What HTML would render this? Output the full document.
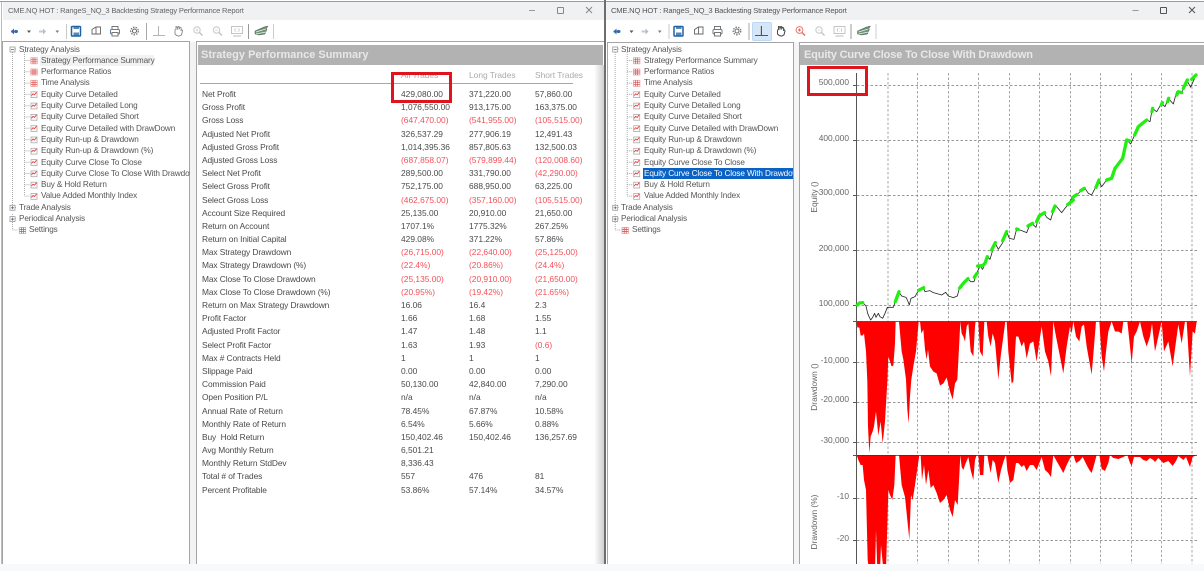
<!DOCTYPE html>
<html><head><meta charset="utf-8"><style>
html,body{margin:0;padding:0;width:1204px;height:571px;overflow:hidden;background:#fff}
body{position:relative;font-family:"Liberation Sans",sans-serif;color:#4a4a4a;filter:blur(.35px)}
.a{position:absolute}
.title{position:absolute;top:2px;height:18px;background:#f0f1f3;font-size:7.6px;line-height:18px;color:#666;white-space:nowrap;letter-spacing:-.2px}
.head{position:absolute;top:45px;height:20px;background:#b2b2b2;color:#e8e8e8;font-weight:bold;font-size:11px;line-height:20px;white-space:nowrap;overflow:hidden}
.tree{position:absolute;top:42px;height:522px;overflow:hidden;font-size:8.2px;color:#555;letter-spacing:-.12px}
.tree div{position:absolute;white-space:nowrap;height:11px;line-height:11px}
.sel{background:#0a62c4;color:#fff;padding:0 1px}
.rep{position:absolute;left:0;top:88px;font-size:8.4px;color:#4a4a4a}
.r{position:relative;height:13.2px;line-height:13.2px;white-space:nowrap}
.r span{position:absolute;top:0}
.r .l{left:202px;letter-spacing:-.1px}.r .c1{left:401px}.r .c2{left:469px}.r .c3{left:535px}
.n{color:#f3515a}
.ax{position:absolute;font-size:8.4px;color:#666;text-align:right;width:49px;line-height:10px;white-space:nowrap}
.rot{position:absolute;font-size:8.4px;color:#666;transform:rotate(-90deg);transform-origin:center;white-space:nowrap;width:80px;text-align:center;line-height:10px}
</style></head><body>

<!-- top border -->
<div class="a" style="left:0;top:1px;width:1204px;height:1px;background:#9c9c9c"></div>

<!-- window chrome -->
<div class="title" style="left:3px;width:601px;padding-left:5px;box-sizing:border-box">CME.NQ HOT : RangeS_NQ_3 Backtesting Strategy Performance Report</div>
<div class="title" style="left:606px;width:598px;padding-left:5px;box-sizing:border-box;color:#555">CME.NQ HOT : RangeS_NQ_3 Backtesting Strategy Performance Report</div>
<div class="a" style="left:604px;top:0;width:2px;height:564px;background:#6e6e6e"></div>
<div class="a" style="left:1px;top:2px;width:1px;height:562px;background:#bbb"></div>
<div class="a" style="left:0;top:564px;width:1204px;height:7px;background:#f8f9fb"></div>

<svg class="a" style="left:0;top:0" width="1204" height="42" fill="none">
<defs>
<g id="tb">
<path d="M11 31.500h7" stroke="#5a84bd" stroke-width="2"/><path d="M14 28.500l-3 3 3 3z" fill="#2f66ad"/><circle cx="16" cy="31.500" r="1.600" fill="#2f66ad"/>
<path d="M27 30.500h4l-2 2.500z" fill="#555"/>
<path d="M39 31.500h6" stroke="#c3cbd6" stroke-width="2"/><path d="M43 28.500l3 3-3 3z" fill="#b4bdc9"/>
<path d="M55.500 30.500h3.500l-1.700 2.500z" fill="#777"/>
<path d="M66.500 24v15" stroke="#c8c8c8"/>
<rect x="71.500" y="26.500" width="9" height="9.500" rx=".8" stroke="#1f63a6" stroke-width="1.500"/><path d="M73.500 32.500h5.500v3.500h-5.500zM73.500 26.500h5.500v2.500h-5.500z" fill="#1f63a6" opacity=".75"/>
<path d="M92 29.500l4-2.500h4.500v7h-8.500zM96 27v7" stroke="#666" stroke-width=".9"/>
<rect x="112" y="26.500" width="6" height="3" stroke="#777"/><rect x="110.500" y="29.500" width="9" height="4.500" rx="1" stroke="#5f7f9f"/><rect x="112" y="32.500" width="6" height="3.500" stroke="#777" fill="#fff"/>
<circle cx="134.500" cy="31" r="2" stroke="#666"/><circle cx="134.500" cy="31" r="3.800" stroke="#777" stroke-width="1.300" stroke-dasharray="1.500 1.200"/>
<path d="M146.500 23v17" stroke="#aaa"/>
<path d="M153 35.500h12M158.500 26v9.500" stroke="#b5b5b5"/>
<path d="M175 34v-4l1-.500v-3l1 .2 .5 2 .7-2.200 1 .2v2l1-1.300 1 .5-.2 2.500 1-.5 .5 1-1 4-2.500 1.200-2.200-.5z" stroke="#888" stroke-width=".9"/>
<circle cx="197" cy="30" r="3.200" stroke="#c7c7c7"/><path d="M199.500 32.500l3 3" stroke="#c0c0c0" stroke-width="1.300"/><path d="M195.500 30h3M197 28.500v3" stroke="#ccc" stroke-width=".7"/>
<circle cx="216.500" cy="30" r="3.200" stroke="#c7c7c7"/><path d="M219 32.500l3 3" stroke="#c0c0c0" stroke-width="1.300"/><path d="M215 30h3" stroke="#ccc" stroke-width=".7"/>
<rect x="231.500" y="26.500" width="11" height="7" stroke="#c4c4c4"/><path d="M233 36h8" stroke="#ccc" stroke-width="1.300"/><path d="M235 28.500v3M237 28.500v.5M237 31v.5M239 28.500v3" stroke="#b0b0b0" stroke-width=".7"/>
<path d="M248.500 24v15" stroke="#999"/>
<path d="M255 31l9-4 4-1-2 3-3 1 4-1-2 5-6 1-4-1z" fill="#6f8f6f" stroke="#556"  stroke-width=".5"/><path d="M256 32l10-3M256 34l10-2" stroke="#dfe" stroke-width=".7"/>
<path d="M273.500 24v15" stroke="#ccc"/>
</g>
</defs>
<use href="#tb"/>
<rect x="752.500" y="22.500" width="19" height="18" rx="1.500" fill="#d4e6f8" stroke="#bcd8f2"/>
<use href="#tb" transform="translate(602.500 0)"/>
<path d="M755 35.500h13M761.500 26v9.500" stroke="#2a5f9a"/>
<circle cx="799.500" cy="30" r="3.400" fill="#fff" stroke="#ee7b6c"/><path d="M802 32.500l3 3" stroke="#ee6a5b" stroke-width="1.300"/><path d="M798 30h3M799.500 28.500v3" stroke="#e34" stroke-width=".7"/>
<path d="M777.500 34v-4l1-.500v-3l1 .2 .5 2 .7-2.200 1 .2v2l1-1.300 1 .5-.2 2.500 1-.5 .5 1-1 4-2.500 1.200-2.200-.5z" stroke="#444" stroke-width=".9"/>
<!-- window controls right -->
<path d="M1132.500 10.500h6" stroke="#999"/><rect x="1160.500" y="7.500" width="6" height="6" rx=".5" stroke="#555"/><path d="M1189 7l6 6M1195 7l-6 6" stroke="#555"/>
<!-- window controls left -->
<path d="M529 10.500h6" stroke="#999"/><rect x="557.500" y="7.500" width="6" height="6" rx=".5" stroke="#888"/><path d="M586 7l6 6M592 7l-6 6" stroke="#888"/>
</svg>

<!-- panel borders -->
<div class="a" style="left:2px;top:41px;width:188px;height:523px;border:1px solid #a5a5a5;border-bottom:0;box-sizing:border-box"></div>
<div class="a" style="left:190px;top:42px;width:6px;height:522px;background:#f3f3f3"></div>
<div class="a" style="left:196px;top:41px;width:408px;height:523px;border-left:1px solid #a5a5a5;border-top:1px solid #a5a5a5;box-sizing:border-box"></div>
<div class="a" style="left:607px;top:42px;width:187px;height:522px;border:1px solid #a5a5a5;border-bottom:0;box-sizing:border-box"></div>
<div class="a" style="left:794px;top:42px;width:5px;height:522px;background:#f5f5f5"></div>
<div class="a" style="left:799px;top:42px;width:405px;height:1px;background:#a5a5a5"></div>
<div class="a" style="left:799px;top:42px;width:1px;height:522px;background:#a5a5a5"></div>

<!-- Left tree -->
<svg class="a" style="left:0;top:0" width="800" height="240" fill="none">
<defs>
<g id="tg"><rect x="-3.200" y="-3" width="6.400" height="6" fill="#fff" stroke="#e2a0a0" stroke-width=".8"/><path d="M-3.200-1h6.400M-3.200 1h6.400M-1 -3v6M1-3v6" stroke="#d44" stroke-width=".7"/></g>
<g id="cg"><rect x="-3" y="-2.800" width="6" height="5.800" fill="#fff" stroke="#aaa" stroke-width=".8"/><path d="M-2.500 1l1.500-1.800 1.500 1 2-2.500" stroke="#e04040" stroke-width=".9"/></g>
<g id="pl"><rect x="-2.500" y="-2.500" width="5" height="5" fill="#fff" stroke="#999" stroke-width=".8"/><path d="M-1.500 0h3" stroke="#456" stroke-width=".7"/></g>
<g id="pp"><use href="#pl"/><path d="M0-1.500v3" stroke="#456" stroke-width=".7"/></g>
<g id="tree">
<path d="M12.500 52v156M24.500 52v144M24.500 60.500h5M24.500 71.800h5M24.500 83.100h5M24.500 94.400h5M24.500 105.700h5M24.500 117h5M24.500 128.300h5M24.500 139.600h5M24.500 150.900h5M24.500 162.200h5M24.500 173.500h5M24.500 184.800h5M24.500 196.100h5M12.500 230h6M12.500 214v16M15 49h2M15 207.500h2M15 218.800h2" stroke="#aaa" stroke-dasharray="1 1"/>
<use href="#pl" x="12.500" y="49.500"/><use href="#pp" x="12.500" y="207.800"/><use href="#pp" x="12.500" y="219.100"/>
<use href="#tg" x="34" y="60.800"/><use href="#tg" x="34" y="72"/><use href="#tg" x="34" y="83.300"/>
<use href="#cg" x="34" y="94.600"/><use href="#cg" x="34" y="105.900"/><use href="#cg" x="34" y="117.200"/><use href="#cg" x="34" y="128.500"/><use href="#cg" x="34" y="139.800"/><use href="#cg" x="34" y="151.100"/><use href="#cg" x="34" y="162.400"/><use href="#cg" x="34" y="173.700"/><use href="#cg" x="34" y="185"/><use href="#cg" x="34" y="196.300"/>
<use href="#tg" x="22.500" y="230.400"/>
</g>
</defs>
<rect x="40" y="55" width="114" height="11" fill="#f2f2f2"/>
<use href="#tree"/><use href="#tree" x="602.700"/>
</svg>

<div class="tree" style="left:0;width:190px">
<div style="left:19px;top:1.500px">Strategy Analysis</div>
<div style="left:41px;top:12.800px">Strategy Performance Summary</div>
<div style="left:41px;top:24.100px">Performance Ratios</div>
<div style="left:41px;top:35.400px">Time Analysis</div>
<div style="left:41px;top:46.700px">Equity Curve Detailed</div>
<div style="left:41px;top:58px">Equity Curve Detailed Long</div>
<div style="left:41px;top:69.300px">Equity Curve Detailed Short</div>
<div style="left:41px;top:80.600px">Equity Curve Detailed with DrawDown</div>
<div style="left:41px;top:91.900px">Equity Run-up &amp; Drawdown</div>
<div style="left:41px;top:103.200px">Equity Run-up &amp; Drawdown (%)</div>
<div style="left:41px;top:114.500px">Equity Curve Close To Close</div>
<div style="left:41px;top:125.800px">Equity Curve Close To Close With Drawdown</div>
<div style="left:41px;top:137.100px">Buy &amp; Hold Return</div>
<div style="left:41px;top:148.400px">Value Added Monthly Index</div>
<div style="left:19px;top:159.700px">Trade Analysis</div>
<div style="left:19px;top:171px">Periodical Analysis</div>
<div style="left:29px;top:182.300px">Settings</div>
</div>

<div class="tree" style="left:611px;width:182px">
<div style="left:10px;top:1.500px">Strategy Analysis</div>
<div style="left:33px;top:12.800px">Strategy Performance Summary</div>
<div style="left:33px;top:24.100px">Performance Ratios</div>
<div style="left:33px;top:35.400px">Time Analysis</div>
<div style="left:33px;top:46.700px">Equity Curve Detailed</div>
<div style="left:33px;top:58px">Equity Curve Detailed Long</div>
<div style="left:33px;top:69.300px">Equity Curve Detailed Short</div>
<div style="left:33px;top:80.600px">Equity Curve Detailed with DrawDown</div>
<div style="left:33px;top:91.900px">Equity Run-up &amp; Drawdown</div>
<div style="left:33px;top:103.200px">Equity Run-up &amp; Drawdown (%)</div>
<div style="left:33px;top:114.500px">Equity Curve Close To Close</div>
<div class="sel" style="left:32px;top:125.800px;width:149px;overflow:hidden">Equity Curve Close To Close With Drawdown</div>
<div style="left:33px;top:137.100px">Buy &amp; Hold Return</div>
<div style="left:33px;top:148.400px">Value Added Monthly Index</div>
<div style="left:10px;top:159.700px">Trade Analysis</div>
<div style="left:10px;top:171px">Periodical Analysis</div>
<div style="left:21px;top:182.300px">Settings</div>
</div>

<!-- Left report -->
<div class="head" style="left:198px;width:405px;padding-left:3px;box-sizing:border-box">Strategy Performance Summary</div>
<div class="a" style="left:197px;top:65px;width:397px;height:499px;background:#fff"></div>
<div class="a" style="left:594px;top:65px;width:10px;height:499px;background:linear-gradient(90deg,#fff,#cfcfcf)"></div>
<div class="a" style="left:200px;top:83px;width:373px;height:1px;background:#a8a8a8"></div>
<div class="a" style="left:401px;top:70px;font-size:8.400px;line-height:10px;color:#aaa">All Trades</div>
<div class="a" style="left:469px;top:70px;font-size:8.400px;line-height:10px;color:#aaa">Long Trades</div>
<div class="a" style="left:535px;top:70px;font-size:8.400px;line-height:10px;color:#aaa">Short Trades</div>

<div class="rep">
<div class="r"><span class="l">Net Profit</span><span class="c1">429,080.00</span><span class="c2">371,220.00</span><span class="c3">57,860.00</span></div>
<div class="r"><span class="l">Gross Profit</span><span class="c1">1,076,550.00</span><span class="c2">913,175.00</span><span class="c3">163,375.00</span></div>
<div class="r"><span class="l">Gross Loss</span><span class="c1 n">(647,470.00)</span><span class="c2 n">(541,955.00)</span><span class="c3 n">(105,515.00)</span></div>
<div class="r"><span class="l">Adjusted Net Profit</span><span class="c1">326,537.29</span><span class="c2">277,906.19</span><span class="c3">12,491.43</span></div>
<div class="r"><span class="l">Adjusted Gross Profit</span><span class="c1">1,014,395.36</span><span class="c2">857,805.63</span><span class="c3">132,500.03</span></div>
<div class="r"><span class="l">Adjusted Gross Loss</span><span class="c1 n">(687,858.07)</span><span class="c2 n">(579,899.44)</span><span class="c3 n">(120,008.60)</span></div>
<div class="r"><span class="l">Select Net Profit</span><span class="c1">289,500.00</span><span class="c2">331,790.00</span><span class="c3 n">(42,290.00)</span></div>
<div class="r"><span class="l">Select Gross Profit</span><span class="c1">752,175.00</span><span class="c2">688,950.00</span><span class="c3">63,225.00</span></div>
<div class="r"><span class="l">Select Gross Loss</span><span class="c1 n">(462,675.00)</span><span class="c2 n">(357,160.00)</span><span class="c3 n">(105,515.00)</span></div>
<div class="r"><span class="l">Account Size Required</span><span class="c1">25,135.00</span><span class="c2">20,910.00</span><span class="c3">21,650.00</span></div>
<div class="r"><span class="l">Return on Account</span><span class="c1">1707.1%</span><span class="c2">1775.32%</span><span class="c3">267.25%</span></div>
<div class="r"><span class="l">Return on Initial Capital</span><span class="c1">429.08%</span><span class="c2">371.22%</span><span class="c3">57.86%</span></div>
<div class="r"><span class="l">Max Strategy Drawdown</span><span class="c1 n">(26,715.00)</span><span class="c2 n">(22,640.00)</span><span class="c3 n">(25,125.00)</span></div>
<div class="r"><span class="l">Max Strategy Drawdown (%)</span><span class="c1 n">(22.4%)</span><span class="c2 n">(20.86%)</span><span class="c3 n">(24.4%)</span></div>
<div class="r"><span class="l">Max Close To Close Drawdown</span><span class="c1 n">(25,135.00)</span><span class="c2 n">(20,910.00)</span><span class="c3 n">(21,650.00)</span></div>
<div class="r"><span class="l">Max Close To Close Drawdown (%)</span><span class="c1 n">(20.95%)</span><span class="c2 n">(19.42%)</span><span class="c3 n">(21.65%)</span></div>
<div class="r"><span class="l">Return on Max Strategy Drawdown</span><span class="c1">16.06</span><span class="c2">16.4</span><span class="c3">2.3</span></div>
<div class="r"><span class="l">Profit Factor</span><span class="c1">1.66</span><span class="c2">1.68</span><span class="c3">1.55</span></div>
<div class="r"><span class="l">Adjusted Profit Factor</span><span class="c1">1.47</span><span class="c2">1.48</span><span class="c3">1.1</span></div>
<div class="r"><span class="l">Select Profit Factor</span><span class="c1">1.63</span><span class="c2">1.93</span><span class="c3 n">(0.6)</span></div>
<div class="r"><span class="l">Max # Contracts Held</span><span class="c1">1</span><span class="c2">1</span><span class="c3">1</span></div>
<div class="r"><span class="l">Slippage Paid</span><span class="c1">0.00</span><span class="c2">0.00</span><span class="c3">0.00</span></div>
<div class="r"><span class="l">Commission Paid</span><span class="c1">50,130.00</span><span class="c2">42,840.00</span><span class="c3">7,290.00</span></div>
<div class="r"><span class="l">Open Position P/L</span><span class="c1">n/a</span><span class="c2">n/a</span><span class="c3">n/a</span></div>
<div class="r"><span class="l">Annual Rate of Return</span><span class="c1">78.45%</span><span class="c2">67.87%</span><span class="c3">10.58%</span></div>
<div class="r"><span class="l">Monthly Rate of Return</span><span class="c1">6.54%</span><span class="c2">5.66%</span><span class="c3">0.88%</span></div>
<div class="r"><span class="l">Buy&nbsp;&nbsp;Hold Return</span><span class="c1">150,402.46</span><span class="c2">150,402.46</span><span class="c3">136,257.69</span></div>
<div class="r"><span class="l">Avg Monthly Return</span><span class="c1">6,501.21</span></div>
<div class="r"><span class="l">Monthly Return StdDev</span><span class="c1">8,336.43</span></div>
<div class="r"><span class="l">Total # of Trades</span><span class="c1">557</span><span class="c2">476</span><span class="c3">81</span></div>
<div class="r"><span class="l">Percent Profitable</span><span class="c1">53.86%</span><span class="c2">57.14%</span><span class="c3">34.57%</span></div>
</div>

<div class="a" style="left:391px;top:72px;width:61px;height:31px;border:3px solid #e0141c;box-sizing:border-box"></div>

<!-- Right chart -->
<div class="head" style="left:800px;width:404px;padding-left:4px;box-sizing:border-box;letter-spacing:-.15px">Equity Curve Close To Close With Drawdown</div>

<svg class="a" style="left:800px;top:65px" width="404" height="499" viewBox="800 65 404 499" fill="none">
<defs>
<clipPath id="cp"><rect x="800" y="65" width="404" height="499"/></clipPath>
<path id="d1" d="M170 0L172 6 178 6 182 14 188 14 192 12 198 30 202 60 204 105 208 132 212 115 218 110 222 105 228 90 235 114 242 100 248 122 255 100 262 60 265 35 275 45 280 44 285 22 287 0 297 0 305 30 310 38 318 58 322 88 326 102 330 75 334 58 340 45 348 30 356 0 360 0 364 12 370 8 375 28 380 38 384 28 390 45 400 50 410 52 420 64 430 62 440 56 450 70 458 78 465 62 472 58 478 20 481 0 485 12 490 15 495 20 500 5 505 2 512 30 520 35 525 5 527 0 535 0 540 30 548 35 553 0 560 0 565 15 572 25 578 12 585 20 595 58 602 35 610 15 616 0 620 0 625 30 635 62 640 60 648 15 655 15 665 25 672 20 680 37 690 22 700 20 710 40 718 20 725 5 735 30 745 40 753 55 760 0 768 15 780 35 790 52 800 25 810 5 815 12 820 0 828 15 838 20 845 5 852 3 860 25 868 40 875 53 882 25 888 0 898 0 905 35 912 50 918 30 925 10 935 0 945 10 955 10 965 12 970 0 982 0 990 25 995 42 1002 15 1010 10 1020 0 1030 15 1040 25 1050 15 1056 2 1065 30 1075 15 1085 0 1092 30 1105 20 1118 45 1128 20 1135 3 1145 22 1155 0 1160 0 1170 55 1178 10 1185 12 1190 0Z"/>
<path id="d2" d="M170 0L175 5 182 10 188 10 192 25 198 35 203 105 207 115 225 115 228 75 232 115 240 115 243 90 250 115 258 115 262 70 265 35 270 40 277 45 283 30 287 0 297 0 305 30 315 42 322 65 328 85 333 40 338 45 345 30 358 0 362 0 366 25 372 10 378 30 385 15 392 33 400 30 410 38 420 48 430 45 440 40 450 55 458 62 465 45 473 50 478 20 481 0 485 12 490 15 495 10 505 2 512 15 520 25 525 5 530 0 535 0 540 20 550 20 553 0 562 0 566 8 572 18 578 5 585 8 595 28 603 15 612 5 618 0 622 15 630 28 640 25 648 8 655 8 665 12 672 10 680 16 690 10 700 10 710 15 718 8 725 2 735 15 745 18 753 22 760 0 768 5 780 12 790 18 800 10 812 2 820 0 828 8 838 6 848 2 860 10 868 15 875 18 882 10 890 0 898 0 905 14 915 16 925 8 930 0 940 3 955 4 970 2 982 0 990 8 995 11 1002 2 1020 2 1030 5 1040 6 1050 3 1060 5 1065 7 1075 3 1090 8 1105 6 1118 11 1128 6 1135 1 1150 5 1158 2 1170 12 1178 2 1190 0Z"/>
</defs>
<g stroke="#777" stroke-width=".8" stroke-dasharray="2.500 2">
<path d="M888 73V564M917.500 73V564M948.500 73V564M978.500 73V564M1009.500 73V564M1039.500 73V564M1070.500 73V564M1100.500 73V564M1131.500 73V564M1161.500 73V564M1192 73V564" stroke="#8f8f8f"/>
<path d="M857 85.500H1197M857 140.500H1197M857 195.500H1197M857 250.500H1197M857 305.500H1197M857 362.500H1197M857 402.500H1197M857 442.500H1197M857 498.500H1197M857 540.500H1197"/>
</g>
<g stroke="#555"><path d="M856.500 73V564"/><path d="M853 85.500h4M853 140.500h4M853 195.500h4M853 250.500h4M853 305.500h4M853 321.500h4M853 362.500h4M853 402.500h4M853 442.500h4M853 455.500h4M853 498.500h4M853 540.500h4"/></g>

<g clip-path="url(#cp)">
<g transform="translate(800 321.500) scale(.33333 1)" fill="#ff0000"><use href="#d1"/></g>
<g transform="translate(800 455) scale(.33333 1)" fill="#ff0000"><use href="#d2"/></g>
</g>
<path d="M857 321.500H1197" stroke="#333" stroke-width=".8"/>
<path d="M857 455.500H1197" stroke="#333" stroke-width=".8"/>

<g transform="translate(800 200) scale(.33333)" stroke-linejoin="round" stroke-linecap="round">
<polyline stroke="#222" stroke-width="2.400" points="170,318 175,310 185,307 190,310 198,318 203,340 208,352 212,360 218,352 224,340 228,352 235,340 240,350 248,355 255,340 262,322 270,322 280,322 286,305 296,275 305,288 318,292 322,300 328,315 333,295 345,290 355,272 370,263 375,275 390,272 400,278 415,282 425,285 437,277 445,288 460,293 472,288 478,265 490,250 503,235 512,245 522,245 530,220 540,198 548,208 555,190 562,170 570,178 585,128 595,148 610,125 620,95 628,115 642,118 650,87 665,92 680,98 688,78 695,70 708,82 715,55 732,38 740,52 752,60 760,32 768,18 785,38 805,12 815,-5 830,-15 845,-30 855,-35 865,-20 875,-15 885,-35 895,-60 905,-40 920,-60 935,-65 945,-95 968,-125 980,-180 992,-168 1015,-220 1040,-240 1050,-235 1057,-275 1070,-265 1085,-290 1095,-280 1105,-305 1120,-288 1130,-325 1145,-320 1160,-360 1172,-338 1188,-375"/>
<g stroke="#22ee11" stroke-width="10">
<polyline points="172,315 178,309 188,308"/>
<polyline points="286,305 297,275"/>
<polyline points="356,271 371,263"/>
<polyline points="479,264 490,250 504,236"/>
<polyline points="523,232 531,220"/><polyline points="533,198 548,197 555,190 562,170"/>
<polyline points="575,150 586,128"/><polyline points="608,122 620,95"/>
<polyline points="650,87 654,88"/><polyline points="684,78 698,70"/><polyline points="710,65 718,47 734,38"/>
<polyline points="758,35 765,18"/><polyline points="803,14 820,0"/>
<polyline points="818,-8 830,-16"/><polyline points="842,-28 853,-35"/><polyline points="888,-38 897,-60"/>
<polyline points="920,-60 935,-65 945,-95 968,-125 980,-180 988,-178"/>
<polyline points="1004,-195 1015,-220 1040,-240"/><polyline points="1056,-265 1058,-275"/><polyline points="1084,-285 1087,-292"/><polyline points="1103,-295 1106,-305"/>
<polyline points="1130,-315 1135,-325 1145,-322"/><polyline points="1150,-335 1162,-360"/><polyline points="1175,-362 1188,-375"/>
</g>
</g>
</svg>

<div class="ax" style="left:800px;top:77px">500,000</div>
<div class="ax" style="left:800px;top:133px">400,000</div>
<div class="ax" style="left:800px;top:187px">300,000</div>
<div class="ax" style="left:800px;top:243px">200,000</div>
<div class="ax" style="left:800px;top:298px">100,000</div>
<div class="ax" style="left:800px;top:355px">-10,000</div>
<div class="ax" style="left:800px;top:394px">-20,000</div>
<div class="ax" style="left:800px;top:435px">-30,000</div>
<div class="ax" style="left:800px;top:491px">-10</div>
<div class="ax" style="left:800px;top:533px">-20</div>
<div class="rot" style="left:774px;top:192px">Equity ()</div>
<div class="rot" style="left:774px;top:382px">Drawdown ()</div>
<div class="rot" style="left:774px;top:517px">Drawdown (%)</div>

<div class="a" style="left:807px;top:66px;width:61px;height:30px;border:3px solid #e0141c;box-sizing:border-box"></div>
</body></html>
